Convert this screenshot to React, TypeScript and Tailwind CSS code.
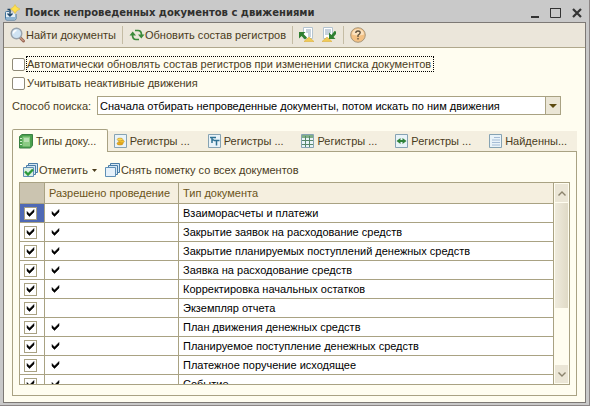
import { useState } from 'react';
import type { ReactNode } from 'react';

const rows = [
  { name: 'Взаиморасчеты и платежи', allowed: true },
  { name: 'Закрытие заявок на расходование средств', allowed: true },
  { name: 'Закрытие планируемых поступлений денежных средств', allowed: true },
  { name: 'Заявка на расходование средств', allowed: true },
  { name: 'Корректировка начальных остатков', allowed: true },
  { name: 'Экземпляр отчета', allowed: false },
  { name: 'План движения денежных средств', allowed: true },
  { name: 'Планируемое поступление денежных средств', allowed: true },
  { name: 'Платежное поручение исходящее', allowed: true },
  { name: 'Событие', allowed: true },
];

function AppIcon() {
  return (
    <svg width="16" height="18" viewBox="0 0 16 18" className="shrink-0">
      <path d="M4 7.500H1.500Q.5 7.500 .5 8.500v6q0 1.500 1.500 1.500h7.500q1.500 0 1.500-1.500V10" fill="#e4eef6" stroke="#3f7199" />
      <path d="M1 13h9.500v2.500H1z" fill="#8fb5d3" />
      <path d="M5 5v7M2.500 9.500 5 12l2.500-2.500M2.500 5.500h3" fill="none" stroke="#1d4467" strokeWidth="1.400" />
      <path d="M10 .5 11.500 3 15 5 11.500 7 10 9.500 8.500 7 5.500 5 8.500 3z" fill="#ffe14d" stroke="#e0c04a" strokeWidth=".7" />
    </svg>
  );
}

function SearchIcon() {
  return (
    <svg width="16" height="16" viewBox="0 0 16 16" className="shrink-0">
      <path d="m10 10.500 3.500 3.500" stroke="#9b6a56" strokeWidth="3" strokeLinecap="round" />
      <path d="m10 10.500 3.500 3.500" stroke="#e0b8a4" strokeWidth="1" />
      <circle cx="6.500" cy="6.500" r="5.300" fill="#cfe3f3" stroke="#98a2ac" strokeWidth="1.400" />
      <path d="M3.500 6.500a3 3 0 0 1 3-3" fill="none" stroke="#fff" strokeWidth="1.500" />
    </svg>
  );
}

function RefreshIcon() {
  return (
    <svg width="16" height="16" viewBox="0 0 16 16" className="shrink-0" fill="none" stroke="#3a8a3a" strokeWidth="1.700">
      <path d="M6 3.500h3Q12.500 3.500 12.500 8M10 12.500H7Q3.500 12.500 3.500 8" />
      <path d="M9 7.500h6.500L12.300 11.500zM.5 8.500H7L3.700 4.500z" fill="#3a8a3a" stroke="none" />
    </svg>
  );
}

function ListArrowIcon({ flip }: { flip?: boolean }) {
  return (
    <svg width="16" height="16" viewBox="0 0 16 16" className="shrink-0">
      <path d={flip ? 'M2.500.5h9v11h-9z' : 'M4.500.5h9v11h-9z'} fill="#fff" stroke="#b4c4d0" />
      <path d={flip ? 'M4 3h6M4 5h6M4 7h5' : 'M7 3h5M7 5h5M9 7h3M9 9h3'} stroke="#8fa6ba" />
      <path d={flip ? 'm1 14.500 5-4.500 5 4.500z' : 'm5 14.500 5-4.500 5 4.500z'} fill="#f0cb55" stroke="#d8a62d" strokeWidth=".5" />
      {flip ? (
        <path d="M8 5.500V12h6.500L12.500 10 15 7V4.500L13.500 4 10.500 8z" fill="#2f7f31" />
      ) : (
        <path d="M0 5h6.500L4.500 7 8 10.500 6 12.500 2.500 9 0 11.500z" fill="#2f7f31" />
      )}
    </svg>
  );
}

function HelpIcon() {
  return (
    <svg width="16" height="16" viewBox="0 0 16 16" className="shrink-0">
      <circle cx="8" cy="8" r="7.300" fill="#f3c184" stroke="#a8977c" />
      <path d="M2 7.500a6 5.500 0 0 1 12 0q-6 2-12 0" fill="#fbe1bd" />
      <path d="M5.800 6q0-2 2.200-2t2.200 1.800Q10.200 7 8 8.200V10M8 11v1.500" fill="none" stroke="#5c4f3a" strokeWidth="1.300" />
    </svg>
  );
}

function BookIcon() {
  return (
    <svg width="14" height="16" viewBox="0 0 14 16" className="shrink-0">
      <path d="M.5 3.500 3 1.500h10.500v11l-2 2.500H.5z" fill="#4aa04d" stroke="#3b8043" />
      <path d="M3.500 3.500h7.500v10h-7.500z" fill="#8ccb84" />
      <path d="M5 6h5M5 8h5" stroke="#e4f5de" />
      <path d="M1 5.500h2M1 8.500h2M1 11.500h2" stroke="#d4efd0" />
    </svg>
  );
}

function TileIcon({ children }: { children: ReactNode }) {
  return (
    <svg width="13" height="14" viewBox="0 0 13 14" className="shrink-0">
      <path d="M.5.5h12v13H.5z" fill="#e9f3f8" stroke="#86a3b3" />
      {children}
    </svg>
  );
}

function StackIcon({ ticked }: { ticked?: boolean }) {
  return (
    <svg width="16" height="15" viewBox="0 0 16 15" className="shrink-0">
      <path d="M5.500.5h9v9h-9z" fill="#d5e7f4" stroke="#4a7da6" />
      <path d="M3.500 2.500h9v9h-9z" fill="#d5e7f4" stroke="#4a7da6" />
      <path d="M.5 4.500h10v9H.5z" fill={ticked ? '#dceee4' : '#e6f1fa'} stroke="#5f8fb5" />
      {ticked && <path d="m2 8.500 3 3L10 6.500" fill="none" stroke="#2c9a3a" strokeWidth="2.400" />}
    </svg>
  );
}

function Tick() {
  return (
    <svg width="9" height="8" viewBox="0 0 9 8" className="pointer-events-none">
      <path d="M1 2.500v2.500L3.500 7.500 8 3V.5L3.500 5z" fill="#000" stroke="#000" strokeWidth=".5" />
    </svg>
  );
}

const tabs: { label: string; icon: ReactNode }[] = [
  { label: 'Типы доку...', icon: <BookIcon /> },
  {
    label: 'Регистры ...',
    icon: (
      <TileIcon>
        <ellipse cx="6" cy="9.500" rx="3" ry="1.500" fill="#e9ac1e" stroke="#b98112" strokeWidth=".5" />
        <ellipse cx="7.500" cy="7.500" rx="2.800" ry="1.400" fill="#f4c531" stroke="#b98112" strokeWidth=".5" />
        <ellipse cx="6" cy="5.500" rx="2.800" ry="1.400" fill="#fbd953" stroke="#b98112" strokeWidth=".5" />
      </TileIcon>
    ),
  },
  {
    label: 'Регистры ...',
    icon: (
      <TileIcon>
        <path d="M2 3.500h6M4 3v6M6 6.500h5.500M8.500 6v5.500M4 6h2" fill="none" stroke="#2f7193" strokeWidth="1.500" />
      </TileIcon>
    ),
  },
  {
    label: 'Регистры ...',
    icon: (
      <TileIcon>
        <path d="M1 1h11v3H1z" fill="#7fae86" />
        <path d="M1 6.500h11M1 10.500h11M4.500 2v11M8.500 2v11" stroke="#57876a" />
      </TileIcon>
    ),
  },
  {
    label: 'Регистры ...',
    icon: (
      <TileIcon>
        <path d="m1.500 7 4-3v2h2V4l4 3-4 3V8h-2v2z" fill="#2f8338" />
      </TileIcon>
    ),
  },
  {
    label: 'Найденны...',
    icon: (
      <TileIcon>
        <path d="M5 3.500h6M3 6h8M3 8.500h8M3 11h8" stroke="#a5bcd6" />
      </TileIcon>
    ),
  },
];

function Separator() {
  return <span className="h-[18px] w-px bg-[#c4bca4]" />;
}

export default function App() {
  const [autoUpdate, setAutoUpdate] = useState(false);
  const [inactive, setInactive] = useState(false);
  const [activeTab, setActiveTab] = useState(0);
  const [checked, setChecked] = useState(rows.map(() => true));

  const toggle = (index: number) => setChecked(checked.map((value, i) => (i === index ? !value : value)));

  return (
    <div className="flex h-screen flex-col border-r border-b border-[#8c8686] bg-[#c9c9c9] px-[3px] pb-[2px] font-['Liberation_Sans',Arial,sans-serif] text-[11px] leading-[14px] text-[#4a3c1c]">
      <header className="flex h-[22px] shrink-0 items-center gap-1 pt-1 pl-0.5 pr-1 text-[#30302e]">
        <AppIcon />
        <h1 className="flex-1 truncate font-['DejaVu_Sans',Verdana,sans-serif] text-[10px] font-bold">
          Поиск непроведенных документов с движениями
        </h1>
        <div className="flex items-center gap-2.5">
          <button aria-label="Свернуть">
            <svg width="10" height="12" viewBox="0 0 10 12">
              <path d="M1 10h8" stroke="#333" strokeWidth="2" />
            </svg>
          </button>
          <button aria-label="Развернуть">
            <svg width="12" height="12" viewBox="0 0 12 12">
              <path d="M.5 1.500h10v9H.5z" fill="none" stroke="#333" />
              <path d="M0 1.500h11" stroke="#333" />
            </svg>
          </button>
          <button aria-label="Закрыть">
            <svg width="10" height="12" viewBox="0 0 10 12">
              <path d="m1 2 8 8M9 2l-8 8" stroke="#333" strokeWidth="2.200" />
            </svg>
          </button>
        </div>
      </header>

      <main className="flex min-h-0 flex-1 flex-col border border-[#7d7975] bg-[#fffdf0]">
        <div className="flex h-[25px] shrink-0 items-center gap-1.5 border-b border-[#b0a88c] bg-[#ebe6da] pl-1.5">
          <button className="flex items-center">
            <SearchIcon />
            Найти документы
          </button>
          <Separator />
          <button className="flex items-center">
            <RefreshIcon />
            Обновить состав регистров
          </button>
          <Separator />
          <button aria-label="Сохранить список">
            <ListArrowIcon />
          </button>
          <button aria-label="Загрузить список">
            <ListArrowIcon flip />
          </button>
          <Separator />
          <button aria-label="Справка">
            <HelpIcon />
          </button>
        </div>

        <div className="flex min-h-0 flex-1 flex-col px-2 pt-2 pb-1.5">
          <div className="flex flex-col items-start gap-1">
            <div className="flex items-center gap-px">
              <input
                id="auto"
                type="checkbox"
                checked={autoUpdate}
                onChange={() => setAutoUpdate(!autoUpdate)}
                className="size-[13px] appearance-none rounded-[2px] border border-[#8f8a78] bg-white checked:bg-[#4a3c1c]"
              />
              <label htmlFor="auto" className="border border-dotted border-black pr-0.5">
                Автоматически обновлять состав регистров при изменении списка документов
              </label>
            </div>
            <div className="flex items-center gap-0.5">
              <input
                id="inactive"
                type="checkbox"
                checked={inactive}
                onChange={() => setInactive(!inactive)}
                className="size-[13px] appearance-none rounded-[2px] border border-[#8f8a78] bg-white checked:bg-[#4a3c1c]"
              />
              <label htmlFor="inactive">Учитывать неактивные движения</label>
            </div>
          </div>

          <div className="mt-1.5 mr-4 flex items-center">
            <label htmlFor="mode" className="w-[85px] shrink-0 whitespace-nowrap">
              Способ поиска:
            </label>
            <div className="grid flex-1">
              <select
                id="mode"
                className="col-start-1 row-start-1 h-[19px] appearance-none border border-[#a9a283] bg-white pr-4 pl-0.5 text-black"
              >
                <option>Сначала отбирать непроведенные документы, потом искать по ним движения</option>
              </select>
              <span className="pointer-events-none col-start-1 row-start-1 flex w-4 items-center justify-center justify-self-end border border-[#a9a283] bg-[#ebe6d6]">
                <svg width="8" height="4" viewBox="0 0 8 4">
                  <path d="M0 0h8L4 4z" fill="#5c4a10" />
                </svg>
              </span>
            </div>
          </div>

          <div role="tablist" className="mt-3.5 flex shrink-0 items-end">
            {tabs.map((tab, index) => (
              <button
                key={index}
                role="tab"
                aria-selected={index === activeTab}
                onClick={() => setActiveTab(index)}
                className={
                  index === activeTab
                    ? 'flex h-[23px] min-w-0 flex-1 items-center gap-[3px] rounded-t-[2px] border border-b-0 border-[#a9a283] bg-[#fffdf0] pl-1.5 whitespace-nowrap'
                    : 'flex h-[21px] min-w-0 flex-1 items-center gap-[3px] border-b border-[#a9a283] bg-[#f4efe0] pl-1.5 whitespace-nowrap'
                }
              >
                {tab.icon}
                {tab.label}
              </button>
            ))}
          </div>

          <section className="flex min-h-0 flex-1 flex-col border border-t-0 border-[#a9a283] px-1.5 pb-2.5">
            <div className="flex h-[30px] shrink-0 items-center gap-2 pt-1.5 pl-1">
              <button className="flex items-center">
                <StackIcon ticked />
                Отметить
                <svg width="5" height="3" viewBox="0 0 5 3" className="ml-1">
                  <path d="M0 0h5L2.500 3z" fill="#4a3c1c" />
                </svg>
              </button>
              <button className="flex items-center">
                <StackIcon />
                Снять пометку со всех документов
              </button>
            </div>

            <div className="flex min-h-0 flex-1 border border-[#a9a283] bg-white">
              <div className="min-w-0 flex-1 overflow-hidden">
                <table className="w-full table-fixed border-separate border-spacing-0 text-left">
                  <thead>
                    <tr className="h-[21px] text-[#6b5420]">
                      <th aria-label="Пометка" className="w-[25px] border-r border-b border-[#a9a283] bg-[#cbc4b0] p-0" />
                      <th className="w-[134px] border-r border-b border-[#a9a283] bg-[#f5efdf] p-0 pl-1 font-normal whitespace-nowrap">
                        Разрешено проведение
                      </th>
                      <th className="border-r border-b border-[#a9a283] bg-[#f5efdf] p-0 pl-1 font-normal">Тип документа</th>
                    </tr>
                  </thead>
                  <tbody>
                    {rows.map((row, index) => (
                      <tr key={row.name} className="h-[19px]">
                        <td
                          className={
                            index === 0
                              ? 'border-r border-b border-[#a9a283] bg-[#4f69b5] p-0'
                              : 'border-r border-b border-[#a9a283] p-0'
                          }
                        >
                          <label className="grid w-[21px] place-items-center">
                            <input
                              type="checkbox"
                              aria-label={row.name}
                              checked={checked[index]}
                              onChange={() => toggle(index)}
                              className="col-start-1 row-start-1 size-[13px] appearance-none border border-[#a9a283] bg-white"
                            />
                            {checked[index] && (
                              <span className="pointer-events-none col-start-1 row-start-1">
                                <Tick />
                              </span>
                            )}
                          </label>
                        </td>
                        <td className="border-r border-b border-[#a9a283] p-0 pl-1.5">{row.allowed && <Tick />}</td>
                        <td className="truncate border-r border-b border-[#a9a283] p-0 pl-1 text-black">{row.name}</td>
                      </tr>
                    ))}
                  </tbody>
                </table>
              </div>
              <div className="flex w-[15px] flex-col bg-[#fffdf0] px-px py-px">
                <button aria-label="Вверх" className="flex h-[18px] items-center justify-center bg-[#ebe6d6]">
                  <svg width="8" height="5" viewBox="0 0 8 5">
                    <path d="m.5 4.500 3.500-3.500 3.500 3.500" fill="none" stroke="#8a836c" strokeWidth="1.400" />
                  </svg>
                </button>
                <div className="mt-px flex-1">
                  <div className="h-[65%] bg-linear-to-r from-[#efebdd] to-[#e0dac6]" />
                </div>
                <button aria-label="Вниз" className="flex h-[18px] items-center justify-center bg-[#ebe6d6]">
                  <svg width="8" height="5" viewBox="0 0 8 5">
                    <path d="m.5.500 3.500 3.500 3.500-3.500" fill="none" stroke="#8a836c" strokeWidth="1.400" />
                  </svg>
                </button>
              </div>
            </div>
          </section>
        </div>
      </main>
    </div>
  );
}
